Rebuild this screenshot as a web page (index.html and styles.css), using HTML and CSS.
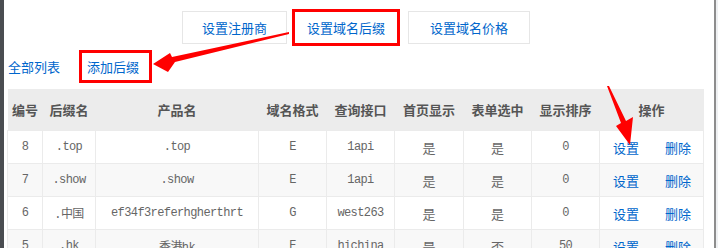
FILE: index.html
```html
<!DOCTYPE html>
<html lang="zh-CN">
<head>
<meta charset="utf-8">
<title>域名后缀</title>
<link rel="stylesheet" href="styles.css">
</head>
<body>
<div class="app">
  <div class="page">
    <div class="topbar"></div>
    <div class="main">
      <div class="strip"></div>
      <div class="content">
        <div class="tabs">
          <a class="tab tab-a">设置注册商</a>
          <a class="tab tab-b">设置域名后缀</a>
          <a class="tab tab-c">设置域名价格</a>
        </div>
        <div class="subnav">
          <a class="sublink">全部列表</a>
          <a class="sublink add">添加后缀</a>
        </div>
        <table class="grid">
          <colgroup>
            <col class="c1"><col class="c2"><col class="c3"><col class="c4"><col class="c5"><col class="c6"><col class="c7"><col class="c8"><col class="c9">
          </colgroup>
          <thead>
            <tr><th>编号</th><th>后缀名</th><th>产品名</th><th>域名格式</th><th>查询接口</th><th>首页显示</th><th>表单选中</th><th>显示排序</th><th>操作</th></tr>
          </thead>
          <tbody>
            <tr><td class="m">8</td><td class="m">.top</td><td class="m">.top</td><td class="m">E</td><td class="m">1api</td><td>是</td><td>是</td><td class="m">0</td><td class="ops"><a>设置</a><a>删除</a></td></tr>
            <tr><td class="m">7</td><td class="m">.show</td><td class="m">.show</td><td class="m">E</td><td class="m">1api</td><td>是</td><td>是</td><td class="m">0</td><td class="ops"><a>设置</a><a>删除</a></td></tr>
            <tr><td class="m">6</td><td class="m">.中国</td><td class="m">ef34f3referhgherthrt</td><td class="m">G</td><td class="m">west263</td><td>是</td><td>是</td><td class="m">0</td><td class="ops"><a>设置</a><a>删除</a></td></tr>
            <tr><td class="m">5</td><td class="m">.hk</td><td class="m">香港hk</td><td class="m">E</td><td class="m">hichina</td><td>是</td><td>否</td><td class="m">50</td><td class="ops"><a>设置</a><a>删除</a></td></tr>
          </tbody>
        </table>
      </div>
    </div>
  </div>
  <div class="gap"></div>
  <div class="vline"></div>
  <div class="side"></div>
  <svg class="marks" width="718" height="248" viewBox="0 0 718 248">
    <polygon fill="#ff0000" points="153,64 170,53 172,57 289,32 289,34 175,62 168,72"/>
    <polygon fill="#ff0000" points="607,86 609,86 626,121 633,117 630,145 616,126 621,123"/>
  </svg>
</div>
</body>
</html>
```

FILE: styles.css
```css
html, body {
  margin: 0;
  padding: 0;
  background: #fff;
  overflow: hidden;
}
body {
  font-family: "Noto Sans CJK SC", "Liberation Sans", sans-serif;
  font-size: 13px;
  color: #555;
}
a { text-decoration: none; color: #0066cc; cursor: pointer; }

.app {
  position: relative;
  display: flex;
  width: 718px;
  height: 248px;
  overflow: hidden;
}
.page {
  width: 712px;
  display: flex;
  flex-direction: column;
}
.topbar {
  height: 4px;
  background: #dddddd;
}
.main {
  flex: 1;
  display: flex;
}
.strip {
  width: 4px;
  background: #4a4d51;
}
.content {
  flex: 1;
}
.gap { width: 2px; background: #fff; }
.vline { width: 2px; background: #8d8d8d; }
.side { flex: 1; background: #eef0f2; }

.tabs {
  display: flex;
  align-items: center;
  padding-left: 178px;
  margin-top: 9px;
  height: 37px;
}
.tab {
  display: block;
  height: 31px;
  line-height: 31px;
  border: 1px solid #e6e6e6;
  white-space: nowrap;
}
.tab-a { padding: 0 19px; }
.tab-b {
  height: 31px;
  border: 3px solid #ff0000;
  padding: 0 12px 0 12px;
  margin-left: 5px;
}
.tab-c { padding: 0 21px; margin-left: 8px; }

.subnav {
  display: flex;
  align-items: center;
  height: 33px;
  margin-top: 4px;
  padding-left: 4px;
}
.sublink { white-space: nowrap; }
.sublink.add {
  margin-left: 19px;
  height: 27px;
  line-height: 27px;
  border: 3px solid #ff0000;
  padding: 0 10px 0 5px;
}

.grid {
  margin: 6px 0 0 3px;
  width: 696px;
  table-layout: fixed;
  border-collapse: collapse;
}
.c1 { width: 35px; }
.c2 { width: 53px; }
.c3 { width: 163px; }
.c4 { width: 68px; }
.c5 { width: 68px; }
.c6 { width: 69px; }
.c7 { width: 68px; }
.c8 { width: 68px; }
.c9 { width: 104px; }

.grid th {
  height: 41px;
  padding: 0;
  background: #ececec;
  color: #555;
  font-weight: bold;
  text-align: center;
  white-space: nowrap;
}
.grid td {
  height: 32px;
  padding: 0;
  border: 1px solid #ebebeb;
  text-align: center;
  white-space: nowrap;
  color: #666;
}
.grid tbody tr:nth-child(even) td { background: #f8f8f8; }
.grid td.m {
  font-family: "Liberation Mono", "Noto Sans CJK SC", monospace;
  font-size: 12px;
  letter-spacing: -0.6px;
}
.grid td.ops a { margin: 0 13px; }

.marks {
  position: absolute;
  left: 0;
  top: 0;
  pointer-events: none;
}
```
